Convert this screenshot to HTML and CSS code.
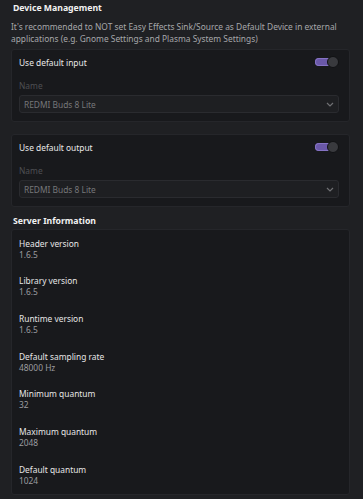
FILE: index.html
```html
<!DOCTYPE html>
<html lang="en">
<head>
    <meta charset="UTF-8">
    <meta name="viewport" content="width=device-width, initial-scale=1.0">
    <title>Easy Effects - PipeWire</title>
    <link rel="stylesheet" href="styles.css">
</head>
<body>
    <div class="page">
        <h2 class="section-title">Device Management</h2>
        <p class="hint">It's recommended to NOT set Easy Effects Sink/Source as Default Device in external applications (e.g. Gnome Settings and Plasma System Settings)</p>

        <div class="card device-card">
            <div class="switch-row">
                <span>Use default input</span>
                <span class="switch on"><span class="knob"></span></span>
            </div>
            <div class="field-label">Name</div>
            <div class="select disabled">
                <span>REDMI Buds 8 Lite</span>
                <svg class="chevron" width="8" height="5" viewBox="0 0 8 5"><path d="M1 1 L4 4 L7 1" fill="none" stroke="#6f7073" stroke-width="1.2"/></svg>
            </div>
        </div>

        <div class="card device-card">
            <div class="switch-row">
                <span>Use default output</span>
                <span class="switch on"><span class="knob"></span></span>
            </div>
            <div class="field-label">Name</div>
            <div class="select disabled">
                <span>REDMI Buds 8 Lite</span>
                <svg class="chevron" width="8" height="5" viewBox="0 0 8 5"><path d="M1 1 L4 4 L7 1" fill="none" stroke="#6f7073" stroke-width="1.2"/></svg>
            </div>
        </div>

        <h2 class="section-title server-title">Server Information</h2>
        <div class="card info-card">
            <div class="info-row"><div class="info-label">Header version</div><div class="info-value">1.6.5</div></div>
            <div class="info-row"><div class="info-label">Library version</div><div class="info-value">1.6.5</div></div>
            <div class="info-row"><div class="info-label">Runtime version</div><div class="info-value">1.6.5</div></div>
            <div class="info-row"><div class="info-label">Default sampling rate</div><div class="info-value">48000 Hz</div></div>
            <div class="info-row"><div class="info-label">Minimum quantum</div><div class="info-value">32</div></div>
            <div class="info-row"><div class="info-label">Maximum quantum</div><div class="info-value">2048</div></div>
            <div class="info-row"><div class="info-label">Default quantum</div><div class="info-value">1024</div></div>
        </div>
    </div>
</body>
</html>
```

FILE: styles.css
```css
body {
    margin: 0;
    background-color: #1f2023;
    font-family: 'Noto Sans', 'Open Sans', sans-serif;
    font-size: 8.4px;
    color: #e4e4e4;
}
.page {
    display: flex;
    flex-direction: column;
    padding: 2px 13px 5px 11px;
}
.section-title {
    margin: 0 0 0 2px;
    font-size: 8.7px;
    font-weight: bold;
    line-height: 12px;
    color: #f2f2f2;
}
.hint {
    margin: 7px 0 4px 0;
    line-height: 12px;
    color: #a6a7aa;
}
.card {
    background-color: #18191c;
    border: 1px solid #25262a;
    border-radius: 3px;
}
.device-card {
    padding: 2px 10px 8px 7px;
    margin-bottom: 12px;
}
.switch-row {
    display: flex;
    align-items: center;
    justify-content: space-between;
    height: 20px;
    color: #e8e8e8;
}
.switch {
    position: relative;
    width: 24px;
    height: 12px;
}
.switch::before {
    content: "";
    position: absolute;
    left: 0;
    top: 2px;
    width: 20px;
    height: 8px;
    border-radius: 4px;
    background-color: #6a58a8;
    box-shadow: inset 0 0 0 1px #8573c4;
}
.switch .knob {
    position: absolute;
    right: 0;
    top: 0;
    width: 10px;
    height: 10px;
    border-radius: 50%;
    background-color: #393a3e;
    border: 1px solid #111214;
}
.field-label {
    margin-top: 8px;
    line-height: 12px;
    color: #4e4f53;
}
.select {
    display: flex;
    align-items: center;
    justify-content: space-between;
    height: 16px;
    margin-top: 3px;
    padding: 0 4px 0 4px;
    background-color: #1e1f22;
    border: 1px solid #2a2b2f;
    border-radius: 3px;
    color: #76777a;
}
.chevron {
    margin-top: 1px;
}
.server-title {
    margin-top: -4px;
    margin-bottom: 2px;
}
.info-card {
    display: flex;
    flex-direction: column;
    gap: 15.7px;
    padding: 7.5px 7px 8.5px 7px;
}
.info-label {
    line-height: 11px;
    color: #e6e6e6;
}
.info-value {
    line-height: 11px;
    color: #9c9da0;
}
```
